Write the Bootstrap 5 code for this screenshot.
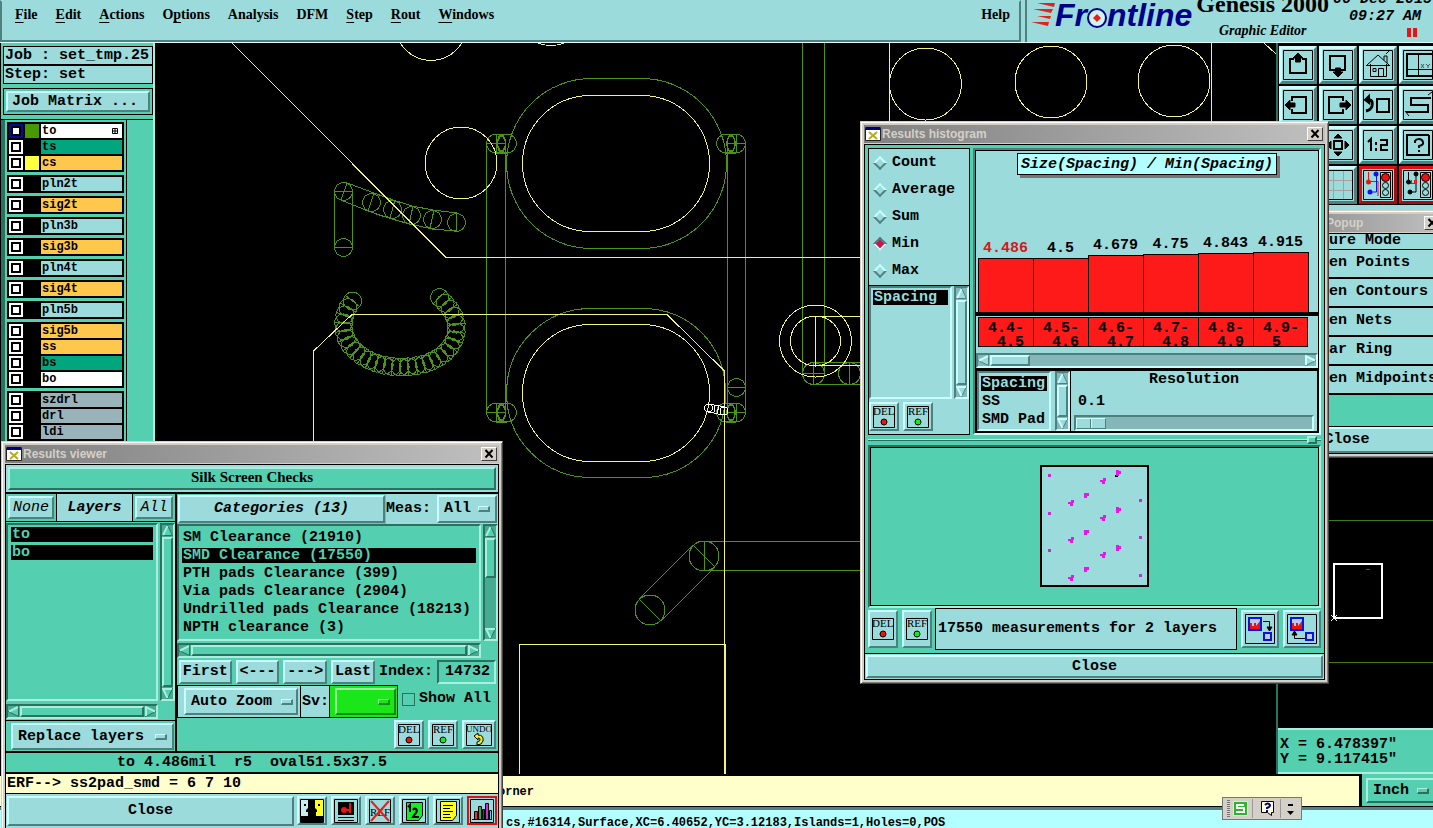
<!DOCTYPE html>
<html lang="en">
<head>
<meta charset="utf-8">
<meta name="viewport" content="width=device-width, initial-scale=1">
<title>Genesis 2000 - Graphic Editor</title>
<link href="https://cdn.jsdelivr.net/npm/bootstrap@5.3.0/dist/css/bootstrap.min.css" rel="stylesheet">
<script src="https://cdn.jsdelivr.net/npm/bootstrap@5.3.0/dist/js/bootstrap.bundle.min.js"></script>
<style>
:root{--blue:#9bdbdb;--blue-hi:#c9ffff;--blue-lo:#4f8080;--blue-tr:#84b8b8;--green:#54cfb0;--green-hi:#a8f0dd;--green-lo:#2c7060;--green-tr:#45ab91;--cream:#ffffcc}
body{background:#000;color:#000;font:bold 15px/18px "Liberation Mono",monospace}
*{border-radius:0!important}
svg{display:block;flex:none}
.desktop{height:100vh}
.serif{font-family:"Liberation Serif",serif}
/* surfaces and bevels */
.on-blue{--hi:var(--blue-hi);--lo:var(--blue-lo);--tr:var(--blue-tr);--bg:var(--blue);background:var(--blue)}
.on-green{--hi:var(--green-hi);--lo:var(--green-lo);--tr:var(--green-tr);--bg:var(--green);background:var(--green)}
.raised{border:2px solid;border-color:var(--hi) var(--lo) var(--lo) var(--hi)}
.sunk{border:2px solid;border-color:var(--lo) var(--hi) var(--hi) var(--lo)}
.line{border:1px solid #000}
.btn{font:inherit;color:#000;padding:0;line-height:18px;border:2px solid;border-color:var(--hi) var(--lo) var(--lo) var(--hi);background:var(--bg)}
.btn:hover{color:#000;background:var(--bg);border-color:var(--hi) var(--lo) var(--lo) var(--hi)}
select,input{font:inherit;color:#000;outline:0}
.opt{position:relative;display:block}
.opt select{appearance:none;width:100%;height:100%;border:2px solid;border-color:var(--hi) var(--lo) var(--lo) var(--hi);background:var(--bg);padding:0 5px;display:block}
.opt::after{content:"";position:absolute;right:7px;top:calc(50% - 3px);width:12px;height:6px;border:1px solid;border-color:var(--hi) var(--lo) var(--lo) var(--hi);border-width:1px 2px 2px 1px;pointer-events:none}
/* header */
.menubar{height:43px;border-bottom:1px solid #dff}
.menus{border:2px solid;border-color:var(--blue) var(--blue-lo) var(--blue-lo) var(--blue-lo);font-size:14px;gap:18px;padding:4px 9px 0 13px}
.menus a{color:#000;text-decoration:none}
.menus u{text-underline-offset:3px}
.brand-pane{width:408px;border-left:2px solid var(--blue-lo)}
.logo-text{font:italic bold 32px/30px "Liberation Sans",sans-serif;color:#00008b}
.product-box{margin-top:-6px}
.product{font-size:24px;line-height:20px}
.tagline{font-size:14px;line-height:18px;font-style:italic}
.clock{margin-top:-9px;line-height:17px}
/* side panels */
.side-l{width:155px;border-left:1px solid #000;border-right:2px solid var(--green-hi)}
.side-r{width:157px;border-left:2px solid var(--green-lo)}
.job-box{padding:3px 0 0 2px;border-bottom:1px solid #000}
.job-cell{height:19px;line-height:17px;white-space:nowrap;padding-left:1px}
.tools{display:grid;grid-template-columns:repeat(4,38px);grid-auto-rows:38px;gap:2px;background:#000;padding:3px 1px 1px}
.tools .btn{border-width:3px;display:flex;align-items:center;justify-content:center}
.tools .hot{border-color:#e01010 #a01010 #a01010 #e01010}
.layers{width:126px;border-left:4px solid var(--green-lo);border-right:1px solid #000;font-size:12px;line-height:14px;padding:2px 2px 0}
.grp{background:#000;padding:2px;gap:2px;margin-bottom:3px}
.lay{height:14px;gap:2px;cursor:default}
.lay input{appearance:none;width:14px;height:14px;margin:0;border:2px solid #fff;background:#fff;box-shadow:inset 0 0 0 2px #000;flex:none}
.lay input:checked{border-color:#0a0a90}
.lay i{width:14px;height:14px;flex:none}
.lay b{flex:1;padding-left:1px;height:14px;overflow:hidden}
.c-or b{background:#ffc84d}.c-bl b{background:var(--blue)}.c-wh b{background:#fff}.c-gr b{background:#00a67d}.c-gy b{background:#9ab3bb}
/* floating windows */
.win{position:absolute;background:#d4d0c8;border:1px solid;border-color:#d4d0c8 #404040 #404040 #d4d0c8;box-shadow:inset 1px 1px #fff,inset -1px -1px #808080;padding:3px;z-index:2}
.titlebar{height:18px;background:linear-gradient(90deg,#808080,#c0c0c0);color:#d4d0c8;font:bold 12px/18px "Liberation Sans",sans-serif;margin-bottom:1px;gap:1px;padding-left:1px}
.xbtn{width:16px;height:14px;border:1px solid;border-color:#fff #404040 #404040 #fff!important;background:#d4d0c8!important;margin-right:2px}
.inner{border:1px solid #000}
.sb{display:flex;gap:1px;border:2px solid;border-color:var(--lo) var(--hi) var(--hi) var(--lo);background:var(--tr)}
.sb.v{flex-direction:column;width:15px}
.sb.h{height:15px}
.sb i{border:2px solid;border-color:var(--hi) var(--lo) var(--lo) var(--hi);background:var(--bg)}
.sb svg{width:11px;height:11px}
.tri{fill:var(--bg);stroke:var(--lo)}
.tri-hi{fill:none;stroke:var(--hi);stroke-width:2}
.items li{height:15px;line-height:15px;margin-bottom:3px;white-space:nowrap;padding-left:1px}
.items .sel{background:#000;color:var(--bg)}
.tight{width:30px;height:29px;display:flex;align-items:center;justify-content:center;flex:none}
.tight.wide{width:34px}
.tight text{font:11px "Liberation Serif",serif}
.radio-row{gap:5px;height:27px}
.radio-row input{appearance:none;width:10px;height:10px;transform:rotate(45deg);border:2px solid;border-color:var(--hi) var(--lo) var(--lo) var(--hi);margin:0 2px;flex:none}
.radio-row input:checked{background:#d0104c;border-color:var(--lo) var(--hi) var(--hi) var(--lo)}
.chart-title{background:#b3ffff;border:1px solid #000;box-shadow:3px 3px #777;font-style:italic;line-height:22px;padding:0 3px;height:22px}
.bars{border-bottom:4px solid #000;padding-left:2px}
.barcol{width:55px;text-align:center}
.bar{background:#ff1a1a;border:1px solid #000;border-bottom:0;margin-right:-1px}
.bin{width:55px;height:30px;background:#ff1a1a;border:1px solid #000;border-right-width:0;white-space:pre;line-height:14px;padding:4px 0 0 9px;overflow:hidden}
.bin:last-child{border-right-width:1px}
.check{appearance:none;width:13px;height:13px;border:1px solid;border-color:var(--hi) var(--lo) var(--lo) var(--hi);margin:0}
.slider{appearance:none;display:block;height:16px;margin:0;border:2px solid;border-color:var(--lo) var(--hi) var(--hi) var(--lo);background:var(--tr)}
.slider::-webkit-slider-thumb{appearance:none;width:30px;height:11px;background:linear-gradient(90deg,var(--bg) 13px,var(--lo) 13px 14px,var(--hi) 14px 15px,var(--bg) 15px);border:1px solid;border-color:var(--hi) var(--lo) var(--lo) var(--hi)}
.mrow{height:29px;border-bottom:2px solid #000;line-height:26px;padding-left:31px}
.ime{position:absolute;right:131px;bottom:8px;height:23px;background:#d4d0c8;border:1px solid #777;z-index:4}
</style>
</head>
<body>
<svg width="0" height="0" class="position-absolute">
 <symbol id="up" viewBox="0 0 11 11"><path class="tri" d="M5.500 0L10.500 10.500H.5z"/><path class="tri-hi" d="M1 10L5.500 1"/></symbol>
 <symbol id="dn" viewBox="0 0 11 11"><path class="tri" d="M.5.500H10.500L5.500 11z"/><path class="tri-hi" d="M10 1H1L5.500 10"/></symbol>
 <symbol id="lf" viewBox="0 0 11 11"><path class="tri" d="M0 5.500L10.500.5V10.500z"/><path class="tri-hi" d="M1 5.500L10 1"/></symbol>
 <symbol id="rt" viewBox="0 0 11 11"><path class="tri" d="M11 5.500L.5.500V10.500z"/><path class="tri-hi" d="M10 5.500L1 1V10"/></symbol>
 <symbol id="xwin" viewBox="0 0 16 14"><path fill="#fff" stroke="#222" d="M.5.500H15.500V13.500H.5z"/><path fill="#00007a" d="M1 0H15V3H1z"/><path stroke="#b5ad1c" stroke-width="2" d="M4 5L12 12M12 5L4 12"/></symbol>
 <symbol id="xx" viewBox="0 0 14 12"><path stroke="#000" stroke-width="2" d="M3.500 2L10.500 9.500M10.500 2L3.500 9.500"/></symbol>
 <symbol id="del" viewBox="0 0 24 24"><path fill="none" stroke="#000" d="M1.500 1.500H22.500V22.500H1.500z"/><circle cx="12" cy="17" r="3" fill="#e11" stroke="#000"/></symbol>
 <symbol id="ref" viewBox="0 0 24 24"><path fill="none" stroke="#000" d="M1.500 1.500H22.500V22.500H1.500z"/><circle cx="12" cy="17" r="3" fill="#1e1" stroke="#000"/></symbol>
</svg>

<div class="desktop d-flex flex-column position-relative overflow-hidden">
 <header class="menubar on-blue d-flex">
  <nav class="menus serif flex-grow-1 d-flex align-items-start" aria-label="Main menu">
   <a href="#"><u>F</u>ile</a><a href="#"><u>E</u>dit</a><a href="#"><u>A</u>ctions</a><a href="#">O<u>p</u>tions</a><a href="#">Analysis</a><a href="#">DFM</a><a href="#"><u>S</u>tep</a><a href="#"><u>R</u>out</a><a href="#"><u>W</u>indows</a>
   <a href="#" class="ms-auto">Help</a>
  </nav>
  <div class="brand-pane d-flex overflow-hidden text-nowrap ms-1">
   <svg width="24" height="30" class="ms-1"><path fill="#e8201c" d="M6 3H24L23 7zM2 9H22L20 13zM6 16H20L19 19zM0 22H18L17 26z"/></svg>
   <div class="logo-text d-flex" aria-label="Frontline">Fr<svg width="20" height="32"><circle cx="10" cy="18" r="9" fill="#cff4f4" stroke="#00008b" stroke-width="2"/><path fill="#e8201c" d="M10 14L14 18L10 22L6 18z"/></svg>ntline</div>
   <div class="product-box serif text-center ms-1"><div class="product">Genesis 2000</div><div class="tagline mt-2">Graphic Editor</div></div>
   <div class="clock fst-italic ms-1"><div>06 Dec 2015</div><div class="ps-3">09:27 AM</div><svg width="90" height="14"><path fill="#e11" d="M74 3h4v9h-4zM80 3h4v9h-4z"/></svg></div>
  </div>
 </header>

 <main class="d-flex flex-grow-1 overflow-hidden">
  <aside class="side-l on-green flex-shrink-0 overflow-hidden">
   <div class="job-box">
    <div class="job-cell line on-blue">Job : set_tmp.25</div>
    <div class="job-cell line on-blue">Step: set</div>
    <div class="line my-1" style="padding:2px"><button class="btn on-blue w-100 text-start ps-1 d-block" style="height:21px;line-height:17px">Job Matrix ...</button></div>
   </div>
   <div class="layers h-100">
    <div class="grp d-flex flex-column">
     <label class="lay d-flex c-wh"><input type="checkbox" checked><i style="background:#469a00"></i><b class="d-flex align-items-center justify-content-between">to<svg width="6" height="6" class="me-1"><path fill="none" stroke="#000" d="M.5.500h5v5h-5zM3 0v6M0 3h6"/></svg></b></label>
     <label class="lay d-flex c-gr"><input type="checkbox"><i></i><b>ts</b></label>
     <label class="lay d-flex c-or"><input type="checkbox"><i style="background:#ffff40"></i><b>cs</b></label>
    </div>
    <div class="grp"><label class="lay d-flex c-bl"><input type="checkbox"><i></i><b>pln2t</b></label></div>
    <div class="grp"><label class="lay d-flex c-or"><input type="checkbox"><i></i><b>sig2t</b></label></div>
    <div class="grp"><label class="lay d-flex c-bl"><input type="checkbox"><i></i><b>pln3b</b></label></div>
    <div class="grp"><label class="lay d-flex c-or"><input type="checkbox"><i></i><b>sig3b</b></label></div>
    <div class="grp"><label class="lay d-flex c-bl"><input type="checkbox"><i></i><b>pln4t</b></label></div>
    <div class="grp"><label class="lay d-flex c-or"><input type="checkbox"><i></i><b>sig4t</b></label></div>
    <div class="grp"><label class="lay d-flex c-bl"><input type="checkbox"><i></i><b>pln5b</b></label></div>
    <div class="grp d-flex flex-column">
     <label class="lay d-flex c-or"><input type="checkbox"><i></i><b>sig5b</b></label>
     <label class="lay d-flex c-or"><input type="checkbox"><i></i><b>ss</b></label>
     <label class="lay d-flex c-gr"><input type="checkbox"><i></i><b>bs</b></label>
     <label class="lay d-flex c-wh"><input type="checkbox"><i></i><b>bo</b></label>
    </div>
    <div class="grp d-flex flex-column">
     <label class="lay d-flex c-gy"><input type="checkbox"><i></i><b>szdrl</b></label>
     <label class="lay d-flex c-gy"><input type="checkbox"><i></i><b>drl</b></label>
     <label class="lay d-flex c-gy"><input type="checkbox"><i></i><b>ldi</b></label>
    </div>
   </div>
  </aside>

  <section class="flex-grow-1 overflow-hidden" aria-label="Board canvas">
   <svg width="100%" height="100%" fill="none" shape-rendering="crispEdges">
    <g transform="translate(-155 -43)">
     <g stroke="#4a9418">
      <rect x="506.500" y="78.500" width="220" height="170" rx="85"/>
      <path d="M506.500 393C506.500 345 545 308.500 591 308.500H642C690 308.500 725.500 345 725.500 393S690 477.500 642 477.500H591C545 477.500 506.500 441 506.500 393z"/>
      <path d="M486.500 143V412M505.500 143V412M727.500 143V412M745.500 143V412"/>
      <g id="vias"><circle cx="496" cy="143.500" r="9.500"/><circle cx="507" cy="143.500" r="9.500"/><ellipse cx="501.500" cy="143.500" rx="4" ry="9"/><path d="M486 143.500H506M496 134V153M496 134H507M496 153H507"/></g>
      <use href="#vias" y="269"/>
      <g id="vias2"><circle cx="726" cy="143.500" r="9.500"/><circle cx="736" cy="143.500" r="9.500"/><ellipse cx="731" cy="143.500" rx="4" ry="9"/><path d="M727 143.500H746M736 134V153M726 134H736M726 153H736"/></g>
      <use href="#vias2" y="269"/>
      <circle cx="736.500" cy="387.500" r="9"/><path d="M728 387.500H745"/>
      <path d="M334.500 191V247M352.500 191V247M334 191.500H353M334 247.500H353M341 200L347 183M346 182.500L374 193Q392 200 412 206L433 210L457 213M341 200L368 211Q390 219 410 224L432 229L456 231M374 193L368 211M395 200L390 218M413 206L409 224M434 210L430 228M457 213L456 231"/>
      <circle cx="343.500" cy="191.500" r="9"/><circle cx="343.500" cy="247.500" r="9"/><circle cx="371.500" cy="202.500" r="9"/><circle cx="392.500" cy="209.500" r="9"/><circle cx="411.500" cy="215.500" r="9"/><circle cx="432.500" cy="219.500" r="9"/><circle cx="456.500" cy="222.500" r="9"/>
      <g id="arc"><path id="arcPath" stroke="none" d="M352.500 301C346 309 343.500 316 343.500 325C343.500 350 370 367 402 367S456.500 350 456.500 328C456.500 315 449 307 439.500 297.500"/></g>
      <path d="M802.500 43V373M824.500 43V373M813 362.500H860M813 384.500H860M813.500 363V384M849.500 363V384M802 373.500H824"/>
      <circle cx="813.500" cy="373.500" r="11"/><circle cx="849.500" cy="373.500" r="11"/>
      <circle cx="704" cy="556" r="15"/><circle cx="650" cy="610" r="15"/>
      <path d="M704 541.500H870M704 570.500H870M704.500 541V571M693 545L715 567M639 599L661 621M693 545L639 599M715 567L661 621"/>
     </g>
     <g stroke="#f2f27c">
      <path d="M232 43L446 257.500H870M313.500 450V351L352 314.500H667L724.500 371V774M519.500 774V644.500H725.500V774"/>
      <circle cx="431" cy="25" r="35.500"/><circle cx="551" cy="10" r="35.500"/><circle cx="461" cy="163" r="36"/>
      <rect x="522.500" y="95.500" width="187" height="136" rx="68"/>
      <rect x="522.500" y="324.500" width="187" height="137" rx="68"/>
      <circle cx="815.500" cy="341" r="36"/><circle cx="815.500" cy="341" r="25"/>
      <path d="M870 316.500H815.500V365.500H870"/>
      <circle cx="925.500" cy="84" r="36"/><circle cx="1051" cy="82" r="36"/><circle cx="1174" cy="81" r="36"/>
      <path d="M889.500 43V130M1211.500 43V130M1264 43L1276 54"/>
     </g>
     <g stroke="#fff"><circle cx="708.500" cy="408" r="4"/><circle cx="724" cy="411" r="4"/><path d="M709 404L725 407M709 412L723 415M714 405V412M719 406L717 413"/></g>
    </g>
   </svg>
  </section>

  <aside class="side-r flex-shrink-0 d-flex flex-column overflow-hidden">
   <div class="on-blue flex-shrink-0" style="height:168px">
    <div class="tools">
     <button class="btn on-blue" aria-label="Pan up"><svg width="30" height="30" fill="none" stroke="#000"><path d="M.5.500h29v29H.5z"/><path stroke-width="2" d="M11 9H7V23H23V9H19"/><path fill="#000" d="M15 3L20 8H17.500V12H12.500V8H10z"/></svg></button>
     <button class="btn on-blue" aria-label="Pan down"><svg width="30" height="30" fill="none" stroke="#000"><path d="M.5.500h29v29H.5z"/><path stroke-width="2" d="M7 6H22V20H7z"/><path fill="#000" d="M15 27L20 22H17.500V18H12.500V22H10z"/></svg></button>
     <button class="btn on-blue" aria-label="Home"><svg width="30" height="30" fill="none" stroke="#000"><path d="M.5.500h29v29H.5zM4 15L15 5L26 15M7.500 14V26.500H23.500V14M3 15.500H27M15.500 26V18.500H20.500V26M10 18.500h3v3h-3zM21 10V6H24V13M23 4L26 1"/></svg></button>
     <button class="btn on-blue" aria-label="Zoom XY"><svg width="30" height="30" fill="none" stroke="#000"><path d="M.5.500h29v29H.5zM15.500 4V26M4 19.500H30"/><path stroke-width="2" d="M30 4H4V26H30"/><path d="M18 14l3 4M21 14l-3 4M23 14l2 2l2-2M25 16v2" stroke="#455"/></svg></button>
     <button class="btn on-blue" aria-label="Pan left"><svg width="30" height="30" fill="none" stroke="#000"><path d="M.5.500h29v29H.5z"/><path stroke-width="2" d="M9 11V7H23V23H9V19"/><path fill="#000" d="M2 15L7 10V13H12V17H7V20z"/></svg></button>
     <button class="btn on-blue" aria-label="Pan right"><svg width="30" height="30" fill="none" stroke="#000"><path d="M.5.500h29v29H.5z"/><path stroke-width="2" d="M20 11V7H6V23H20V19"/><path fill="#000" d="M28 15L23 10V13H17V17H23V20z"/></svg></button>
     <button class="btn on-blue" aria-label="Previous view"><svg width="30" height="30" fill="none" stroke="#000" stroke-width="2"><path stroke-width="1" d="M.5.500h29v29H.5z"/><path d="M14 9H26V22H14z"/><path stroke-width="3" d="M4 10H7Q10 11 9 16Q8 20 3 21"/><path fill="#000" d="M2 10L6 6V13z"/></svg></button>
     <button class="btn on-blue" aria-label="Serpentine"><svg width="30" height="30" fill="none" stroke="#000"><path d="M.5.500h29v29H.5z"/><path stroke-width="2" d="M28 8H8V15H25V22H3"/><path d="M25 5l4-3M2 21l4 5"/></svg></button>
     <button class="btn on-blue" aria-label="Center"></button>
     <button class="btn on-blue" aria-label="Pan"><svg width="30" height="30" fill="none" stroke="#000"><path d="M.5.500h29v29H.5z"/><path stroke-width="2" d="M11 11H19V19H11z"/><path fill="#000" d="M15 4l4 4h-8zM15 26l4-4h-8zM26 15l-4-4v8zM4 15l4-4v8z"/></svg></button>
     <button class="btn on-blue" aria-label="Scale 1:2"><svg width="30" height="30" fill="none" stroke="#000"><path d="M.5.500h29v29H.5z"/><path stroke-width="2" d="M5 12L8 9V21M13 12v3M13 18v3M17 10H24V15H18V20H25"/></svg></button>
     <button class="btn on-blue" aria-label="Help"><svg width="30" height="30" fill="none" stroke="#000"><path d="M.5.500h29v29H.5z"/><path stroke-width="2" d="M26 5H4V25H26V5M12 13V11Q13 9 16 9T20 12T16 16V18M16 20V22"/></svg></button>
     <button class="btn on-blue" aria-label="Snap"></button>
     <button class="btn on-blue" aria-label="Grid"><svg width="30" height="30" fill="none" stroke="#b09c9c"><path d="M10.500 0V30M20.500 0V30M0 10.500H30M0 20.500H30"/><path stroke="#000" d="M.5.500h29v29H.5z"/></svg></button>
     <button class="btn on-blue hot" aria-label="Net check"><svg width="30" height="30" fill="none" stroke="#000"><path stroke="#e11" d="M5.500 2V11.500H15V26"/><path stroke="#11e" d="M13.500 4V22H7"/><g stroke="none"><circle cx="5.500" cy="12" r="2.500" fill="#e11"/><circle cx="13" cy="4" r="2.500" fill="#11e"/><circle cx="7" cy="22" r="2.500" fill="#11e"/></g><path d="M.5.500h29v29H.5zM17.500 2.500h10v25h-10z"/><circle cx="22.500" cy="7.500" r="4" fill="#e11"/><circle cx="22.500" cy="15.500" r="3"/><circle cx="22.500" cy="22.500" r="3"/></svg></button>
     <button class="btn on-blue hot" aria-label="Short check"><svg width="30" height="30" fill="none" stroke="#000"><path d="M5.500 2V11M13 4V22H7"/><path stroke="#e11" d="M6 13.500H14M8.500 10V13M11.500 10V13M13.500 10V13"/><g fill="#000"><circle cx="5.500" cy="12" r="2"/><circle cx="13" cy="4" r="2"/><circle cx="7" cy="22" r="2"/></g><path d="M.5.500h29v29H.5zM17.500 2.500h10v25h-10z"/><circle cx="22.500" cy="7.500" r="4" fill="#e11"/><circle cx="22.500" cy="15.500" r="3"/><circle cx="22.500" cy="22.500" r="3"/></svg></button>
    </div>
   </div>
   <div class="flex-grow-1 bg-black overflow-hidden">
    <svg width="100%" height="100%" fill="none" shape-rendering="crispEdges"><path stroke="#3f7d14" d="M0 309.500H160M0 451.500H160"/><rect x="56" y="353" width="48" height="54" stroke="#fff" stroke-width="2"/><path stroke="#fff" d="M53 404l6 6M59 404l-6 6"/><path stroke="#e11" d="M88 358.500h4"/></svg>
   </div>
   <div class="on-green sunk flex-shrink-0" style="height:46px;border-width:2px 0;border-top-color:var(--green-hi);line-height:15px;padding:7px 0 0 2px">X = 6.478397"<br>Y = 9.117415"</div>
  </aside>
 </main>

 <footer class="flex-shrink-0">
  <div class="d-flex" style="height:33px">
   <div class="flex-grow-1" style="background:var(--cream);border-top:2px solid #000;font-size:12px;line-height:32px;padding-left:498px">orner</div>
   <div class="on-green py-1 ps-1" style="width:71px;margin-left:3px"><label class="opt h-100" style="width:70px"><select aria-label="Units"><option>Inch</option></select></label></div>
  </div>
  <div class="overflow-hidden text-nowrap" style="height:21px;background:#b3ffff;border-top:3px solid #5a7f7f;outline:1px solid #000;font-size:12px;line-height:26px;padding-left:506px">cs,#16314,Surface,XC=6.40652,YC=3.12183,Islands=1,Holes=0,POS</div>
 </footer>

 <!-- Measure popup -->
 <section class="win" style="top:210px;right:-13px;width:198px;z-index:1">
  <div class="titlebar d-flex align-items-center"><svg width="16" height="14"><use href="#xwin"/></svg><span class="flex-grow-1 ps-1">Measure Popup</span><button class="btn xbtn" aria-label="Close"><svg width="14" height="12"><use href="#xx"/></svg></button></div>
  <div class="inner on-blue">
   <div class="text-center" style="height:16px;line-height:14px;border-bottom:1px solid #000">Measure Mode</div>
   <div class="mrow">Between Points</div><div class="mrow">Between Contours</div><div class="mrow">Between Nets</div><div class="mrow">Annular Ring</div><div class="mrow">Between Midpoints</div>
   <div class="on-green" style="height:32px;border-bottom:1px solid #000"></div>
   <button class="btn on-blue w-100 d-block" style="height:26px">Close</button>
  </div>
 </section>

 <!-- Results histogram -->
 <section class="win" style="top:121px;right:104px;width:469px">
  <div class="titlebar d-flex align-items-center"><svg width="16" height="14"><use href="#xwin"/></svg><span class="flex-grow-1">Results histogram</span><button class="btn xbtn" aria-label="Close"><svg width="14" height="12"><use href="#xx"/></svg></button></div>
  <div class="inner on-green" style="padding:3px">
   <div class="d-flex" style="height:287px;gap:3px">
    <div class="on-blue line d-flex flex-column" style="width:102px">
     <div class="ps-1" style="height:137px;border-bottom:1px solid #000">
      <label class="radio-row d-flex align-items-center"><input type="radio" name="stat">Count</label>
      <label class="radio-row d-flex align-items-center"><input type="radio" name="stat">Average</label>
      <label class="radio-row d-flex align-items-center"><input type="radio" name="stat">Sum</label>
      <label class="radio-row d-flex align-items-center"><input type="radio" name="stat" checked>Min</label>
      <label class="radio-row d-flex align-items-center"><input type="radio" name="stat">Max</label>
     </div>
     <div class="d-flex justify-content-between flex-grow-1">
      <ul class="items list-unstyled sunk m-0" style="width:83px;padding:2px"><li class="sel">Spacing</li></ul>
      <div class="sb v"><svg><use href="#up"/></svg><i class="flex-grow-1"></i><svg><use href="#dn"/></svg></div>
     </div>
     <div class="d-flex gap-1 align-items-center" style="height:35px">
      <button class="btn on-blue tight" aria-label="Delete"><svg width="24" height="24"><use href="#del"/><text x="1" y="10">DEL</text></svg></button>
      <button class="btn on-blue tight" aria-label="Reference"><svg width="24" height="24"><use href="#ref"/><text x="2" y="10">REF</text></svg></button>
     </div>
    </div>
    <div class="on-blue flex-grow-1 d-flex flex-column sunk">
     <div class="line flex-grow-1 d-flex flex-column">
      <div class="d-flex justify-content-center" style="padding-top:2px"><div class="chart-title">Size(Spacing) / Min(Spacing)</div></div>
      <div class="bars d-flex align-items-end flex-grow-1">
       <div class="barcol"><span style="color:#d01c1c">4.486</span><div class="bar" style="height:54px"></div></div>
       <div class="barcol">4.5<div class="bar" style="height:54px"></div></div>
       <div class="barcol">4.679<div class="bar" style="height:57px"></div></div>
       <div class="barcol">4.75<div class="bar" style="height:58px"></div></div>
       <div class="barcol">4.843<div class="bar" style="height:59px"></div></div>
       <div class="barcol">4.915<div class="bar" style="height:60px"></div></div>
      </div>
      <div class="d-flex" style="padding:1px 0 6px 2px"><div class="bin">4.4-
 4.5</div><div class="bin">4.5-
 4.6</div><div class="bin">4.6-
 4.7</div><div class="bin">4.7-
 4.8</div><div class="bin">4.8-
 4.9</div><div class="bin">4.9-
 5</div></div>
      <div class="sb h"><svg><use href="#lf"/></svg><i style="width:40px"></i><svg class="ms-auto"><use href="#rt"/></svg></div>
     </div>
     <div class="d-flex" style="height:64px;border:2px solid #000">
      <ul class="items list-unstyled sunk m-0 overflow-hidden" style="width:74px;padding:3px 2px"><li class="sel">Spacing</li><li>SS</li><li>SMD Pad</li></ul>
      <div class="sb v ms-1"><svg><use href="#up"/></svg><i class="flex-grow-1"></i><svg><use href="#dn"/></svg></div>
      <div class="flex-grow-1 d-flex flex-column" style="border-left:1px solid #000;padding:0 3px">
       <label for="res" class="text-center">Resolution</label>
       <output for="res" class="ps-1 mt-1">0.1</output>
       <input type="range" id="res" class="slider w-100 mt-1" min="0" max="100" value="0">
      </div>
     </div>
    </div>
   </div>
   <div class="d-flex justify-content-end align-items-center pe-1" style="height:10px;background:linear-gradient(var(--green) 4px,var(--green-hi) 4px 5px,var(--green-lo) 5px 6px,var(--green) 6px)"><span class="raised on-green" style="width:10px;height:8px"></span></div>
   <div class="sunk" style="height:163px"><div class="line h-100 d-flex justify-content-center" style="padding-top:17px">
    <svg width="109" height="122"><rect x="1" y="1" width="107" height="120" fill="#9bdbdb" stroke="#000" stroke-width="2"/>
     <path fill="#000" d="M75 10h3v2h-3z"/>
     <defs><path id="cl" d="M-3-1h3v-2h3v3h-1v3h-3v-2h-2z"/><path id="cr" d="M-2-3h5v3h-2v2h-3z"/><path id="cq" d="M-2-3h3v1h2v3h-2v2h-3z"/></defs>
     <path fill="#c82ad8" d="M8 9h3v3h-3zM8 47h3v3h-3zM8 84h3v3h-3zM99 34h3v3h-3zM99 71h3v3h-3zM99 109h3v3h-3z"/>
     <g fill="#e815e8"><use href="#cl" x="31" y="38"/><use href="#cr" x="46" y="31"/><use href="#cl" x="63" y="16"/><use href="#cq" x="78" y="8"/><use href="#cl" x="31" y="75"/><use href="#cr" x="46" y="68"/><use href="#cl" x="63" y="53"/><use href="#cq" x="78" y="45"/><use href="#cl" x="31" y="113"/><use href="#cr" x="46" y="105"/><use href="#cl" x="63" y="90"/><use href="#cq" x="78" y="83"/></g></svg>
   </div></div>
   <div class="d-flex align-items-center gap-1" style="height:42px">
    <button class="btn on-blue tight" style="height:38px" aria-label="Delete"><svg width="24" height="24"><use href="#del"/><text x="1" y="10">DEL</text></svg></button>
    <button class="btn on-blue tight" style="height:38px" aria-label="Reference"><svg width="24" height="24"><use href="#ref"/><text x="2" y="10">REF</text></svg></button>
    <div class="line on-blue flex-grow-1" style="height:42px;line-height:40px;padding-left:2px;margin-left:-1px">17550 measurements for 2 layers</div>
    <button class="btn on-blue tight" style="width:38px;height:38px" aria-label="Send down"><svg width="30" height="30" fill="none" stroke="#000"><path d="M.5.500h29v29H.5zM18 7.500H24.500V15"/><path fill="#000" d="M22 13h5l-2.500 4z"/><path stroke="#11d" stroke-width="2" fill="#bcd" d="M4 4H16V16H4zM19 19H26V26H19z"/><path fill="#e11" stroke="none" d="M5 9h2v3h2v-3h2v3l4-5v8H5z"/></svg></button>
    <button class="btn on-blue tight" style="width:38px;height:38px" aria-label="Bring up"><svg width="30" height="30" fill="none" stroke="#000"><path d="M.5.500h29v29H.5zM18 24.500H7.500V19"/><path fill="#000" d="M5 21h5l-2.500-4z"/><path stroke="#11d" stroke-width="2" fill="#bcd" d="M4 4H16V16H4zM19 19H26V26H19z"/><path fill="#e11" stroke="none" d="M5 9h2v3h2v-3h2v3l4-5v8H5z"/></svg></button>
   </div>
  </div>
  <div class="inner border-top-0 on-blue" style="padding:1px"><button class="btn on-blue w-100 d-block" style="height:23px">Close</button></div>
 </section>

 <!-- Results viewer -->
 <section class="win" style="top:441px;left:1px;width:502px">
  <div class="titlebar d-flex align-items-center"><svg width="16" height="14"><use href="#xwin"/></svg><span class="flex-grow-1">Results viewer</span><button class="btn xbtn" aria-label="Close"><svg width="14" height="12"><use href="#xx"/></svg></button></div>
  <div class="inner on-green">
   <div class="on-blue" style="padding:2px;border-bottom:2px solid #000"><div class="on-green raised serif text-center" style="height:23px;line-height:17px">Silk Screen Checks</div></div>
   <div class="d-flex">
    <div class="d-flex flex-column flex-shrink-0" style="width:171px;border-right:2px solid #000">
     <div class="d-flex fst-italic" style="height:28px;border-bottom:1px solid #000">
      <button class="btn on-blue fw-normal" style="width:46px;margin:2px">None</button>
      <div class="on-blue flex-grow-1 text-center line border-top-0 border-bottom-0" style="line-height:28px">Layers</div>
      <button class="btn on-blue fw-normal" style="width:38px;margin:2px">All</button>
     </div>
     <div class="d-flex justify-content-between" style="height:180px;padding:1px 0">
      <ul class="items list-unstyled sunk m-0" style="width:152px;padding:2px 3px"><li class="sel">to</li><li class="sel">bo</li></ul>
      <div class="sb v"><svg><use href="#up"/></svg><i class="flex-grow-1"></i><svg><use href="#dn"/></svg></div>
     </div>
     <div class="sb h" style="width:152px;margin:2px 0 1px"><svg><use href="#lf"/></svg><i class="flex-grow-1"></i><svg><use href="#rt"/></svg></div>
     <div class="flex-grow-1" style="border-top:1px solid #000;padding:2px 1px 1px 5px"><label class="opt on-blue h-100"><select aria-label="Layer mode"><option>Replace layers</option></select></label></div>
    </div>
    <div class="d-flex flex-column flex-grow-1 overflow-hidden">
     <div class="d-flex on-blue" style="height:30px">
      <div class="on-green flex-shrink-0" style="padding:1px"><button class="btn on-blue fst-italic" style="width:207px;height:28px">Categories (13)</button></div>
      <label for="meas" class="flex-grow-1" style="line-height:30px">Meas:</label>
      <div class="opt" style="width:60px;margin:1px"><select id="meas"><option>All</option></select></div>
     </div>
     <div class="d-flex justify-content-between" style="height:117px">
      <ul class="items list-unstyled sunk m-0" style="width:304px;padding:4px 3px 0"><li>SM Clearance (21910)</li><li class="sel">SMD Clearance (17550)</li><li>PTH pads Clearance (399)</li><li>Via pads Clearance (2904)</li><li>Undrilled pads Clearance (18213)</li><li>NPTH clearance (3)</li></ul>
      <div class="sb v"><svg><use href="#up"/></svg><i style="height:40px"></i><svg class="mt-auto"><use href="#dn"/></svg></div>
     </div>
     <div class="sb h" style="width:304px;margin:2px 0"><svg><use href="#lf"/></svg><i class="flex-grow-1"></i><svg><use href="#rt"/></svg></div>
     <div class="d-flex gap-1 align-items-center" style="padding:0 2px">
      <button class="btn on-blue" style="width:53px;height:24px">First</button><button class="btn on-blue" style="width:44px;height:24px">&lt;---</button><button class="btn on-blue" style="width:44px;height:24px">---&gt;</button><button class="btn on-blue" style="width:44px;height:24px">Last</button>
      <label for="idx" class="text-nowrap">Index:</label><input id="idx" class="on-green sunk ms-auto" style="width:59px;height:24px;padding:0 0 2px 6px" value="14732">
     </div>
     <div class="d-flex" style="height:33px;margin-top:1px">
      <label class="opt line on-blue flex-shrink-0" style="width:124px;padding:2px 2px 2px 6px"><select aria-label="Zoom mode"><option>Auto Zoom</option></select></label>
      <label for="sv" class="on-blue flex-shrink-0" style="width:28px;line-height:31px;border:solid #000;border-width:1px 0;padding-left:1px">Sv:</label>
      <div class="opt line flex-shrink-0" style="width:69px;--bg:#1ae61a;--hi:#9f9;--lo:#178a17;background:#1ae61a;padding:2px 1px 2px 5px"><select id="sv"><option></option></select></div>
      <label class="d-flex gap-1 text-nowrap ms-1" style="padding-top:5px"><input type="checkbox" class="check" style="--hi:#2c7060;margin-top:3px">Show All</label>
     </div>
     <div class="d-flex justify-content-end gap-1" style="padding:2px">
      <button class="btn on-blue tight" aria-label="Delete"><svg width="24" height="24"><use href="#del"/><text x="1" y="10">DEL</text></svg></button>
      <button class="btn on-blue tight" aria-label="Reference"><svg width="24" height="24"><use href="#ref"/><text x="2" y="10">REF</text></svg></button>
      <button class="btn on-blue tight wide" aria-label="Undo"><svg width="28" height="24"><path fill="none" stroke="#000" d="M1.500 1.500h25v21h-25z"/><text x="1" y="9" style="font-size:9px">UNDO</text><path fill="#ee3" stroke="#000" d="M9 13l4-3v2q6 0 5 6q-1 4-6 4v-3q4-1 3-3q0-1-2-1v2z"/></svg></button>
     </div>
    </div>
   </div>
   <div class="text-center" style="height:23px;border-top:2px solid #000;border-bottom:2px solid #000;line-height:20px;white-space:pre">to 4.486mil  r5  oval51.5x37.5</div>
   <div style="height:20px;background:var(--cream);border-bottom:1px solid #000;padding-left:1px;line-height:20px">ERF--&gt; ss2pad_smd = 6 7 10</div>
   <div class="on-blue d-flex justify-content-between" style="padding:2px 1px">
    <button class="btn on-blue" style="width:287px;height:30px">Close</button>
    <div class="d-flex gap-1">
    <button class="btn on-blue tight" aria-label="Contrast"><svg width="24" height="24"><path fill="#fff" d="M1 1h11v22H1z" opacity=".5"/><path fill="#ff2" d="M12 1h11v22H12z"/><path d="M8 1h7v8l2 2v2h-1v4h7v6H1v-6h7v-4H6v-2l2-2zM4 5h2v2H4zM18 5h2v2h-2z"/><path fill="none" stroke="#000" d="M.5.500h23v23H.5z"/></svg></button>
    <button class="btn on-blue tight" aria-label="Record"><svg width="24" height="24"><path fill="none" stroke="#000" d="M.5.500h23v23H.5z"/><path d="M4 3h16v13H4z"/><circle cx="10" cy="11" r="3" fill="#e11"/><path stroke="#e11" stroke-width="2" d="M16 4v10M10 11h6"/><path stroke="#000" d="M4 18.500h16M4 21.500h16"/></svg></button>
    <button class="btn on-blue tight" aria-label="Remove reference"><svg width="24" height="24"><path fill="none" stroke="#000" d="M1.500.5h21v23h-21z"/><text x="2" y="17">REF</text><path stroke="#d22" stroke-width="2" d="M3 2l18 20M21 2L3 22"/></svg></button>
    <button class="btn on-blue tight" aria-label="Numbered report"><svg width="24" height="24"><path fill="none" stroke="#000" d="M.5.500h23v23H.5z"/><path fill="#1e2" stroke="#000" d="M4.500 3.500h16v13l-4 5h-12z"/><path fill="none" stroke="#000" stroke-width="2" d="M6 8l2-2v7M11 11q1-2 3-1q2 2-1 5l-2 3h6"/></svg></button>
    <button class="btn on-blue tight" aria-label="Notes"><svg width="24" height="24"><path fill="none" stroke="#000" d="M.5.500h23v23H.5z"/><path fill="#ff2" stroke="#000" d="M4.500 2.500h16v14l-4 5h-12zM7 6.500h10M7 9.500h7M7 12.500h10M7 15.500h7M7 18.500h8"/></svg></button>
    <button class="btn on-blue tight" style="border-color:#e01010" aria-label="Histogram"><svg width="24" height="24" stroke="#000"><path fill="none" d="M.5.500h23v23H.5z"/><path fill="#e33" d="M4.500 12.500h3v8h-3z"/><path fill="#2a6" d="M8.500 7.500h3v13h-3z"/><path fill="#33d" d="M12.500 10.500h2v10h-2z"/><path fill="#c3c" d="M15.500 4.500h3v16h-3z"/><path fill="#3de" d="M19.500 11.500h2v9h-2z"/><path d="M2 20.500h20"/></svg></button>
    </div>
   </div>
  </div>
 </section>

 <div class="ime d-flex align-items-center px-1">
  <svg width="70" height="21"><path stroke="#777" stroke-dasharray="1 1" stroke-width="3" d="M1.500 2v18"/><path fill="#2db52d" stroke="#d4f0d4" d="M6.500 3.500h14v14h-14z"/><path fill="none" stroke="#fff" stroke-width="2" d="M17 7h-7v3h7v4h-8"/><path stroke="#999" d="M25.500 1v19M53.500 1v19"/><path fill="#ffd" stroke="#000" d="M34.500 3.500h12v11h-2v3l-4-3h-6z"/><path fill="none" stroke="#007" stroke-width="2" d="M38 7q3-3 5 0q0 2-3 3v1M40 12v2"/><path d="M61 6h5v2h-5zM60 13h7l-3.500 4z"/></svg>
 </div>
</div>
<script>
/* pads laid along the curved trace */
(function(){
 var p=document.getElementById('arcPath'),g=document.getElementById('arc'),n=27,L=p.getTotalLength(),ns='http://www.w3.org/2000/svg';
 for(var i=0;i<=n;i++){
  var s=L*i/n,a=p.getPointAtLength(s),b=p.getPointAtLength(Math.min(L,s+1)),c=p.getPointAtLength(Math.max(0,s-1));
  var t=Math.atan2(b.y-c.y,b.x-c.x)+Math.PI/2,dx=9*Math.cos(t),dy=9*Math.sin(t);
  var o=document.createElementNS(ns,'circle');o.setAttribute('cx',a.x);o.setAttribute('cy',a.y);o.setAttribute('r',9);g.appendChild(o);
  var l=document.createElementNS(ns,'path');l.setAttribute('d','M'+(a.x-dx)+' '+(a.y-dy)+'L'+(a.x+dx)+' '+(a.y+dy));g.appendChild(l);
 }
})();
</script>
</body>
</html>
